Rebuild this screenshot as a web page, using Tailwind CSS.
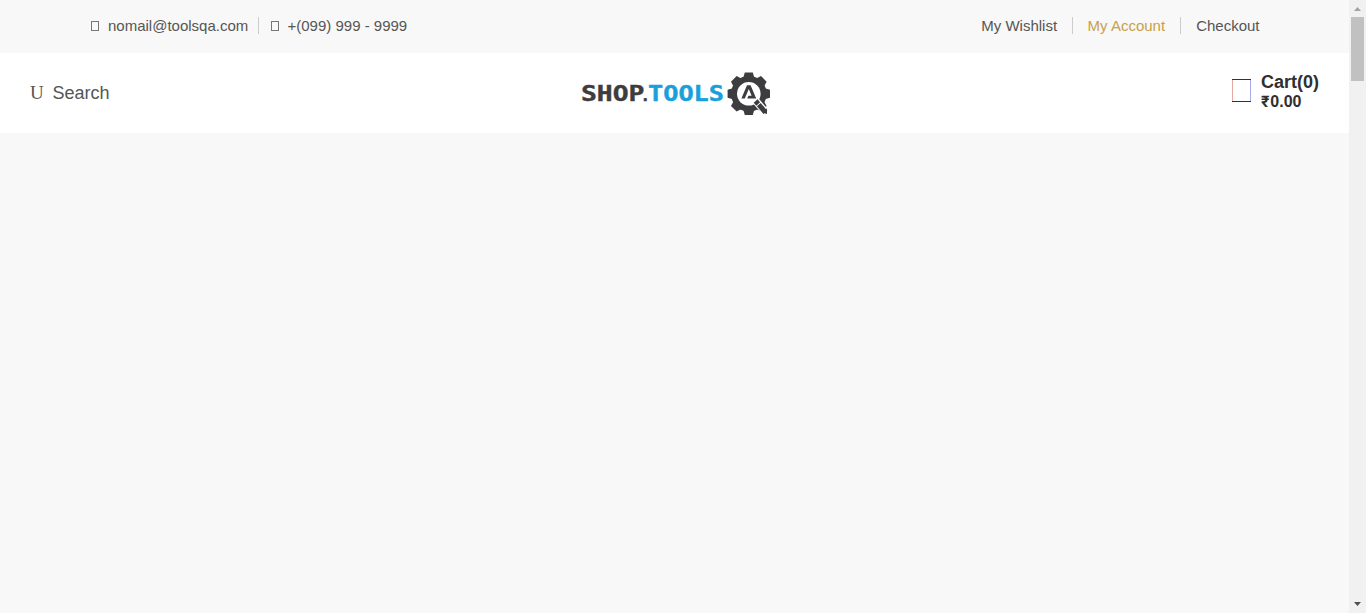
<!DOCTYPE html>
<html lang="en">
<head>
<meta charset="utf-8">
<title>Shop Tools</title>
<script src="https://cdn.jsdelivr.net/npm/@tailwindcss/browser@4"></script>
</head>
<body class="flex h-[613px] overflow-hidden bg-[#f8f8f8] font-['Liberation_Sans',Arial,sans-serif] text-[#555]">
<div class="flex w-[1349px] shrink-0 flex-col">
  <div class="flex h-[53px] items-start justify-between pt-[17px] pr-[89px] pl-[91px] text-[15px] leading-[18px]">
    <div class="flex">
      <span class="mt-1 mr-[9px] h-[10px] w-2 border border-[#777]"></span>
      <span class="w-[150px] whitespace-nowrap">nomail@toolsqa.com</span>
      <span class="h-[17px] w-px bg-[#ccc]"></span>
      <span class="mt-1 mr-[8.5px] ml-3 h-[10px] w-2 border border-[#777]"></span>
      <span class="whitespace-nowrap">+(099) 999 - 9999</span>
    </div>
    <nav class="flex whitespace-nowrap">
      <a class="pr-[15px]">My Wishlist</a>
      <span class="h-[17px] w-px bg-[#ccc]"></span>
      <a class="px-[14.5px] text-[#c7a14a]">My Account</a>
      <span class="h-[17px] w-px bg-[#ccc]"></span>
      <a class="pr-[0.5px] pl-[15.5px]">Checkout</a>
    </nav>
  </div>
  <header class="grid h-20 grid-cols-[581px_190px_1fr] bg-white">
    <div class="flex items-center pl-[30px] text-lg">
      <span class="w-[22.5px] font-['Liberation_Serif',serif] text-[19px]">U</span>
      <span>Search</span>
    </div>
    <svg class="mt-[17px] h-[47px] w-[190px]" viewBox="581 70 190 47">
      <g font-family="DejaVu Sans Mono, monospace" font-weight="700" font-size="20.5" stroke-width=".4">
        <text x="581" y="100.5" textLength="63.5" lengthAdjust="spacingAndGlyphs" fill="#3d3d3f" stroke="#3d3d3f">SHOP</text>
        <text x="642.8" y="100.5" font-family="Liberation Sans, Arial, sans-serif" font-size="18" fill="#3d3d3f" stroke="#3d3d3f">.</text>
        <text x="648" y="100.5" textLength="76" lengthAdjust="spacingAndGlyphs" fill="#1b9fdc" stroke="#1b9fdc">TOOLS</text>
      </g>
      <g transform="translate(748.8 93.8)">
        <g fill="#3d3d3f">
          <circle r="17.8"/>
          <path id="tooth" d="M-5.5-16L-4-21.2H4L5.5-16V16L4 21.2H-4L-5.5 16Z"/>
          <use href="#tooth" transform="rotate(45)"/>
          <use href="#tooth" transform="rotate(90)"/>
          <use href="#tooth" transform="rotate(135)"/>
        </g>
        <circle r="11.8" fill="#fff"/>
        <path d="M6 6L19.5 21.5" stroke="#fff" stroke-width="7.4"/>
        <path d="M6.8 7.2L9.4 10.2M10 10.9L16.6 18.5" stroke="#3d3d3f" stroke-width="5"/>
        <path d="M14 19L18.2 14.5V20.2Z" fill="#3d3d3f"/>
        <path d="M-7.4 4.8L-1.8-8.6H1.8L7.4 4.8H-1.6L-.4 2H2.8L0-4.8L-4 4.8Z" fill="#3d3d3f"/>
      </g>
    </svg>
    <div class="flex items-start justify-end pt-[19px] pr-[30px] font-bold text-[#2f2f2f]">
      <svg class="mt-[7px] mr-[10px] h-[23px] w-[19px]" viewBox="0 0 19 23"><path d="M0 .5H19M0 22.5H19" stroke="#333"/><path d="M.5 1V22" stroke="#e8a9a0"/><path d="M18.5 1V22" stroke="#a9a9ee"/></svg>
      <div class="whitespace-nowrap">
        <div class="text-lg leading-5">Cart(0)</div>
        <div class="text-base leading-[19px]"><span class="inline-block w-[9.3px] font-['Roboto',sans-serif]">₹</span>0.00</div>
      </div>
    </div>
  </header>
</div>
<div class="flex w-[17px] shrink-0 flex-col bg-[#f1f1f1]">
  <svg class="h-[17px] w-[17px]" viewBox="0 0 17 17"><path d="M5 11L8.5 7L12 11Z" fill="#a3a3a3"/></svg>
  <div class="ml-[2px] h-16 w-[13px] bg-[#c1c1c1]"></div>
  <svg class="mt-auto h-[17px] w-[17px]" viewBox="0 0 17 17"><path d="M5 6L8.5 10L12 6Z" fill="#505050"/></svg>
</div>
</body>
</html>
